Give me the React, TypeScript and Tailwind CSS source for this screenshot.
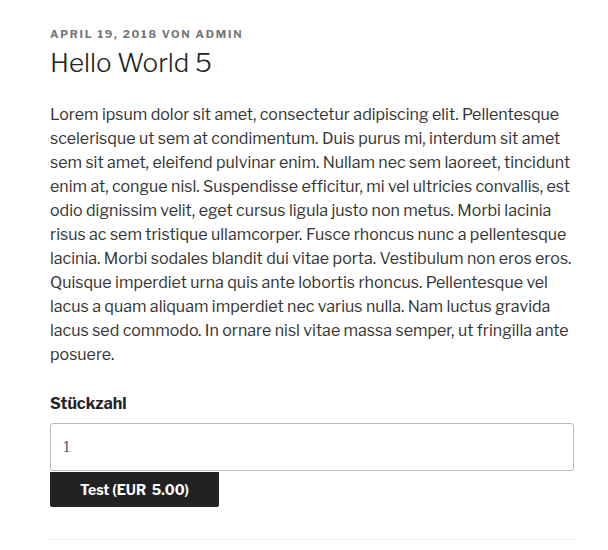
import React from 'react';

const lines = [
  'Lorem ipsum dolor sit amet, consectetur adipiscing elit. Pellentesque',
  'scelerisque ut sem at condimentum. Duis purus mi, interdum sit amet',
  'sem sit amet, eleifend pulvinar enim. Nullam nec sem laoreet, tincidunt',
  'enim at, congue nisl. Suspendisse efficitur, mi vel ultricies convallis, est',
  'odio dignissim velit, eget cursus ligula justo non metus. Morbi lacinia',
  'risus ac sem tristique ullamcorper. Fusce rhoncus nunc a pellentesque',
  'lacinia. Morbi sodales blandit dui vitae porta. Vestibulum non eros eros.',
  'Quisque imperdiet urna quis ante lobortis rhoncus. Pellentesque vel',
  'lacus a quam aliquam imperdiet nec varius nulla. Nam luctus gravida',
  'lacus sed commodo. In ornare nisl vitae massa semper, ut fringilla ante',
  'posuere.',
];

export default function App() {
  return (
    <div className="min-h-[550px] w-[608px] bg-white font-['Libre_Franklin','Inter',sans-serif] text-[#333]">
      <article className="ml-[50px] w-[524px] pt-[28px]">
        <div className="text-[11px] font-bold uppercase leading-[13px] tracking-[0.16em] text-[#767676]">
          April 19, 2018 von admin
        </div>
        <h1 className="mt-[6px] text-[26px] font-light leading-[32px] text-[#222]">Hello World 5</h1>
        <div className="mt-[24px] text-[16px] leading-[24px]">
          {lines.map((l) => (
            <div key={l} className="whitespace-nowrap">
              {l}
            </div>
          ))}
        </div>
        <div className="mt-[25px] text-[16px] font-bold leading-[24px] text-[#222]">Stückzahl</div>
        <div className="mt-[7px] flex h-[48px] items-center rounded-[3px] border border-[#bbb] px-[11px] font-['DejaVu_Serif',serif] text-[15px] text-[#666]">
          1
        </div>
        <button className="mt-[1px] flex h-[35px] w-[169px] items-center justify-center rounded-b-[2px] bg-[#222] text-[14px] font-bold text-white">
          <span className="whitespace-pre">{'Test (EUR  5.00)'}</span>
        </button>
        <div className="mt-[32px] border-t border-[#eee]" />
      </article>
    </div>
  );
}
